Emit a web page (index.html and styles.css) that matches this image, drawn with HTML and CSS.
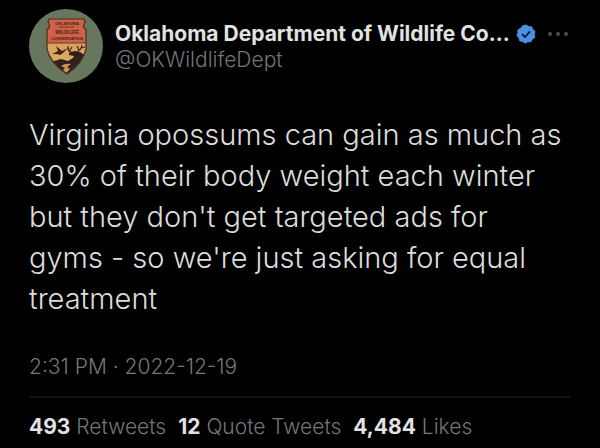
FILE: index.html
```html
<!DOCTYPE html>
<html lang="en">
<head>
    <meta charset="UTF-8">
    <meta name="viewport" content="width=device-width, initial-scale=1.0">
    <title>Oklahoma Department of Wildlife Conservation</title>
    <link rel="stylesheet" href="styles.css">
</head>
<body>
    <article class="tweet">
        <header class="tweet-header">
            <a class="avatar" href="#" aria-label="Profile">
                <svg viewBox="0 0 74 74" aria-hidden="true">
                    <defs>
                        <linearGradient id="dusk" x1="0" y1="0" x2="0" y2="1">
                            <stop offset="0" stop-color="#d9a05c"/>
                            <stop offset="1" stop-color="#dfb568"/>
                        </linearGradient>
                        <clipPath id="shield">
                            <path d="M20 10H55L56 13Q53 17 56 20H57V40Q54 54 38 65Q21 54 18 40V20H19Q22 17 19 13Z"/>
                        </clipPath>
                    </defs>
                    <circle cx="37" cy="37" r="37" fill="#66775d"/>
                    <g clip-path="url(#shield)">
                        <path d="M17 9H58V34H17Z" fill="#ce6248"/>
                        <path d="M17 34H58V66H17Z" fill="url(#dusk)"/>
                        <!-- hills -->
                        <path d="M17 50L25 52L32 50L39 52L44 49L57 50V66H17Z" fill="#30211a"/>
                        <path d="M32 57Q36 54 42 55L38 58L41 60L37 64L34 61L36 59Z" fill="#c99852"/>
                        <!-- bird -->
                        <path d="M23 45L29 42L27 37L33 42L39 39L34 44L31 46L28 45Z" fill="#38271c"/>
                        <!-- deer -->
                        <path d="M43 51L45 47L40 46L40 44L45 42L51 43L57 47V57L48 60Z" fill="#30211a"/>
                        <path d="M44 44Q38 42 39 37M41 41L43 38M47 43Q52 42 53 36M50 41L48 37M52 39L56 38" fill="none" stroke="#30211a" stroke-width="1.2"/>
                    </g>
                    <path d="M20 10H55L56 13Q53 17 56 20H57V40Q54 54 38 65Q21 54 18 40V20H19Q22 17 19 13Z" fill="none" stroke="#4b2c20" stroke-width="1.2"/>
                    <path d="M18 34H57M30 18H45" stroke="#713829" stroke-width="1"/>
                    <g class="shield-text">
                        <text class="shield-small" x="38" y="16">OKLAHOMA</text>
                        <text class="shield-large" x="38" y="25">WILDLIFE</text>
                        <text class="shield-small" x="38" y="31">CONSERVATION</text>
                    </g>
                </svg>
            </a>
            <div class="author">
                <div class="name-row">
                    <a class="name" href="#">Oklahoma Department of Wildlife Co...</a>
                    <svg class="verified" viewBox="0 0 20 20" role="img" aria-label="Verified account">
                        <path d="M10 1L12.5 2.6L15.5 2.8L16.8 5.5L19 7.5L18.3 10.5L18.8 13.4L16.3 15.1L14.8 17.7L11.8 17.8L9.2 19.2L6.8 17.5L3.8 16.8L2.9 13.9L1 11.6L2 8.8L1.9 5.8L4.6 4.4L6.4 2Z" fill="#4a91e3" stroke="#4a91e3" stroke-width="1" stroke-linejoin="round"/>
                        <path d="M6 10.2L9 13L14 7.3" fill="none" stroke="#07162b" stroke-width="1.8"/>
                    </svg>
                    <button class="more" type="button" aria-label="More">
                        <svg viewBox="0 0 20 4" aria-hidden="true">
                            <circle cx="2" cy="2" r="2"/>
                            <circle cx="10" cy="2" r="2"/>
                            <circle cx="18" cy="2" r="2"/>
                        </svg>
                    </button>
                </div>
                <a class="handle" href="#">@OKWildlifeDept</a>
            </div>
        </header>

        <p class="tweet-text">Virginia opossums can gain as much as 30% of their body weight each winter but they don't get targeted ads for gyms - so we're just asking for equal treatment</p>

        <time class="date" datetime="2022-12-19T14:31">2:31 PM · 2022-12-19</time>

        <footer class="stats">
            <a href="#"><strong>493</strong> Retweets</a>
            <a href="#"><strong>12</strong> Quote Tweets</a>
            <a href="#"><strong>4,484</strong> Likes</a>
        </footer>
    </article>
</body>
</html>
```
FILE: styles.css
```css
body {
    margin: 0;
    background-color: #000;
    color: #dcdcdc;
    font-family: Inter, "Liberation Sans", sans-serif;
    font-size: 21px;
    font-weight: 300;
    line-height: 26px;
}

a {
    color: inherit;
    text-decoration: none;
}

.tweet {
    padding: 9px 29px 0;
}

.tweet-header {
    display: flex;
    gap: 12px;
}

.avatar {
    flex: none;
    width: 74px;
    height: 74px;
}

.avatar svg {
    display: block;
}

.shield-text {
    fill: #4b1f18;
    font-family: "Liberation Sans", sans-serif;
    font-weight: 700;
    text-anchor: middle;
}

.shield-small {
    font-size: 4px;
}

.shield-large {
    font-size: 5px;
}

.author {
    flex: 1;
    min-width: 0;
    padding-top: 12px;
}

.name-row {
    display: flex;
    align-items: center;
}

.name {
    color: #e2e2e2;
    font-weight: 700;
    white-space: nowrap;
}

.verified {
    flex: none;
    width: 20px;
    height: 20px;
    margin-left: 6px;
}

.more {
    display: flex;
    margin-left: auto;
    padding: 0 3px;
    border: none;
    background: none;
    cursor: pointer;
}

.more svg {
    width: 20px;
    height: 4px;
    fill: #4b4d50;
}

.handle {
    display: block;
    color: #74767a;
}

.tweet-text {
    margin: 31px 0 35px;
    padding-right: 8px;
    font-size: 29px;
    font-weight: 300;
    line-height: 41px;
}

.date {
    display: block;
    color: #74767a;
}

.stats {
    display: flex;
    gap: 12px;
    margin-top: 16px;
    padding-top: 16px;
    border-top: 2px solid #111213;
    color: #74767a;
}

.stats strong {
    color: #e2e2e2;
    font-weight: 700;
}
```
